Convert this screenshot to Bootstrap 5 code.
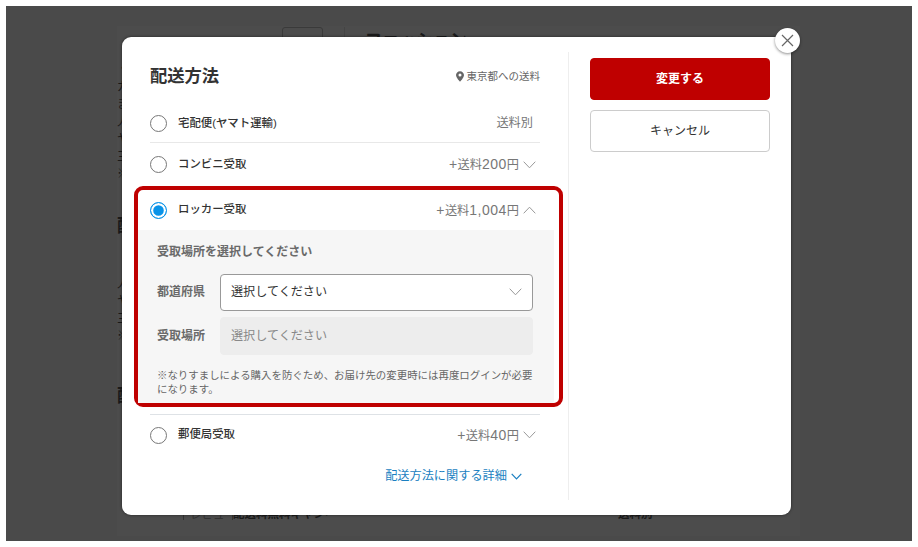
<!DOCTYPE html>
<html lang="ja">
<head>
<meta charset="utf-8">
<title>配送方法</title>
<link href="https://cdn.jsdelivr.net/npm/bootstrap@5.3.0/dist/css/bootstrap.min.css" rel="stylesheet">
<style>
html,body{height:547px;overflow:hidden;background:#fff;}
body{font-family:"Liberation Sans","Noto Sans CJK JP",sans-serif;color:#333;padding:6px;}
.backdrop-area{position:relative;width:906px;height:535px;background:#4a4a4a;overflow:hidden;}
.under-page{margin-left:111px;width:683px;height:510px;margin-top:20px;background:#4c4c4c;color:#1a1a1a;overflow:hidden;}
.under-top{height:27px;padding-top:1px;}
.under-box{width:41px;height:30px;border:1px solid #3a3a3a;border-radius:3px;margin-left:165px;}
.under-title{font-size:17px;font-weight:700;line-height:26px;margin-left:21px;padding:1px 0 0 20px;border-left:1px solid #444;height:30px;}
.under-text{font-size:12px;line-height:17.5px;margin-top:8px;white-space:nowrap;}
.under-text.later{margin-top:20.5px;}
.under-head{font-size:18px;font-weight:700;line-height:24px;margin-top:30px;}
.under-head.later{margin-top:38px;}
.under-foot{height:12px;margin-top:100.5px;font-size:11.5px;line-height:12px;}
.foot-box{width:50px;margin-left:66px;border:1px solid #333;border-bottom:0;padding-left:6px;color:#333;overflow:hidden;white-space:nowrap;}
.foot-strong{width:95px;font-weight:700;white-space:nowrap;overflow:hidden;}
.foot-right{margin-left:290px;font-weight:700;white-space:nowrap;}
.sheet{position:absolute;left:116px;top:31px;width:669px;height:478px;background:#fff;border-radius:9px;box-shadow:0 0 3px rgba(0,0,0,.55);padding:15px 0;}
.close-round{position:absolute;left:653px;top:-9px;width:25px;height:25px;border-radius:50%;background:#fff;border:0;padding:0;box-shadow:0 1px 3px rgba(0,0,0,.45);}
.main-col{width:447px;padding:0 28px;border-right:1px solid #eee;height:448px;}
.side-col{width:222px;padding:6px 21px 0 21px;}
.sheet-title{height:50px;}
.sheet-title h2{font-size:17.3px;font-weight:700;margin:0;line-height:49px;color:#333;}
.area-note{font-size:10.5px;color:#666;line-height:49px;}
.area-pin{margin-right:3px;}
.ship-row{height:41px;padding-right:4px;}
.ship-row.rule{border-bottom:1px solid #e8e8e8;padding-top:3px;padding-right:7px;}
.ship-row.tall{height:43px;}
.ship-radio{width:17px;height:17px;margin:0 11px 0 0 !important;border:1.7px solid #777;flex:none;background-color:#fff;}
.ship-radio:checked{background-color:#0a93e8;border-color:#0a93e8;background-image:none;box-shadow:inset 0 0 0 2.2px #fff;}
.ship-name{font-size:11.4px;font-weight:500;color:#333;}
.ship-fee{font-size:12.2px;color:#777;}
.fee-num{font-size:14px;letter-spacing:.5px;}
.fee-chevron{margin-left:4px;}
.locker-box{margin:0 -23px 7px -16px;border:4px solid #bf0000;border-radius:9px;height:221px;}
.locker-head{height:40px;padding:0 23px 0 12px;}
.locker-panel{width:416px;height:173px;background:#f6f6f6;padding:12px 21px 0 19px;}
.panel-title{font-size:12px;font-weight:700;color:#6a6a6a;line-height:20px;margin-bottom:12px;}
.field-row{margin-bottom:6.5px;}
.field-label{width:63px;font-size:12px;font-weight:700;color:#6a6a6a;flex:none;}
.field-select{height:36.5px;padding:0 10px;font-size:12.1px;color:#333;border:1px solid #999;border-radius:4px;background-position:right 10px center;background-size:13px 8px;background-image:url("data:image/svg+xml,%3Csvg xmlns='http://www.w3.org/2000/svg' viewBox='0 0 13 8'%3E%3Cpath d='M.7.7 6.5 6.8 12.3.7' fill='none' stroke='%23999' stroke-width='1'/%3E%3C/svg%3E");}
.field-select:disabled{height:37.5px;background-color:#ededed;border-color:#ededed;background-image:none;color:#888;opacity:1;}
.panel-note{font-size:10.44px;line-height:14px;color:#666;margin:14px 0 0;}
.more-link{font-size:12.2px;color:#1a7fc1;text-decoration:none;line-height:20px;}
.more-wrap{padding:11px 18px 0 0;}
.primary-act{height:42px;background:#bf0000;border:1px solid #bf0000;border-radius:4px;color:#fff;font-size:12px;font-weight:700;margin-bottom:10px;}
.primary-act:hover{background:#bf0000;color:#fff;}
.ghost-act{height:42px;background:#fff;border:1px solid #ccc;border-radius:4px;color:#333;font-size:12px;}
</style>
</head>
<body>
<div class="backdrop-area">
  <div class="under-page">
    <div class="under-top d-flex overflow-hidden"><div class="under-box"></div><div class="under-title">ファッション</div></div>
    <div class="under-text">・<br>ガ送料<br>ま送料<br>人送料<br>ヤ送料<br>三送料<br>※送料</div>
    <div class="under-head">配送</div>
    <div class="under-text later">「送料<br>人送料<br>ヤ送料<br>三送料<br>※送料</div>
    <div class="under-head later">配送</div>
    <div class="under-foot d-flex">
      <div class="foot-box">レビュー</div>
      <div class="foot-strong">配送料無料キャンペーン対象</div>
      <div class="foot-right">送料別</div>
    </div>
  </div>

  <div class="sheet d-flex">
    <div class="main-col">
      <div class="sheet-title d-flex justify-content-between align-items-start">
        <h2>配送方法</h2>
        <span class="area-note d-flex align-items-center">
          <svg class="area-pin" width="8" height="11" viewBox="0 0 9 12"><path fill-rule="evenodd" fill="#666" d="M4.500 0C2 0 0 2 0 4.400 0 7.500 4.500 12 4.500 12S9 7.500 9 4.400C9 2 7 0 4.500 0Zm0 6a1.700 1.700 0 1 1 0-3.400 1.700 1.700 0 0 1 0 3.400Z"/></svg>東京都への送料
        </span>
      </div>

      <div class="ship-row rule d-flex align-items-center">
        <input class="form-check-input ship-radio" type="radio" name="ship" aria-label="宅配便">
        <span class="ship-name flex-grow-1">宅配便(ヤマト運輸)</span>
        <span class="ship-fee">送料別</span>
      </div>
      <div class="ship-row tall d-flex align-items-center">
        <input class="form-check-input ship-radio" type="radio" name="ship" aria-label="コンビニ">
        <span class="ship-name flex-grow-1">コンビニ受取</span>
        <span class="ship-fee"><span class="fee-num">+</span>送料<span class="fee-num">200</span>円</span>
        <svg class="fee-chevron" width="13" height="8" viewBox="0 0 13 8"><path d="M.7.7 6.500 6.800 12.300.7" fill="none" stroke="#999" stroke-width="1"/></svg>
      </div>

      <div class="locker-box">
        <div class="locker-head d-flex align-items-center">
          <input class="form-check-input ship-radio" type="radio" name="ship" checked aria-label="ロッカー">
          <span class="ship-name flex-grow-1">ロッカー受取</span>
          <span class="ship-fee"><span class="fee-num">+</span>送料<span class="fee-num">1,004</span>円</span>
          <svg class="fee-chevron" width="13" height="8" viewBox="0 0 13 8"><path d="M.7 7.300 6.500 1.200 12.300 7.300" fill="none" stroke="#999" stroke-width="1"/></svg>
        </div>
        <div class="locker-panel">
          <div class="panel-title">受取場所を選択してください</div>
          <div class="field-row d-flex align-items-center">
            <span class="field-label">都道府県</span>
            <select class="form-select field-select" aria-label="都道府県"><option>選択してください</option></select>
          </div>
          <div class="field-row d-flex align-items-center">
            <span class="field-label">受取場所</span>
            <select class="form-select field-select" disabled aria-label="受取場所"><option>選択してください</option></select>
          </div>
          <p class="panel-note">※なりすましによる購入を防ぐため、お届け先の変更時には再度ログインが必要になります。</p>
        </div>
      </div>

      <div class="ship-row d-flex align-items-center border-top">
        <input class="form-check-input ship-radio" type="radio" name="ship" aria-label="郵便局">
        <span class="ship-name flex-grow-1">郵便局受取</span>
        <span class="ship-fee"><span class="fee-num">+</span>送料<span class="fee-num">40</span>円</span>
        <svg class="fee-chevron" width="13" height="8" viewBox="0 0 13 8"><path d="M.7.7 6.500 6.800 12.300.7" fill="none" stroke="#999" stroke-width="1"/></svg>
      </div>
      <div class="more-wrap d-flex justify-content-end">
        <a class="more-link d-inline-flex align-items-center" href="#">配送方法に関する詳細
          <svg class="ms-1" width="11" height="7" viewBox="0 0 11 7"><path d="M.7.8 5.500 5.800 10.300.8" fill="none" stroke="#1a7fc1" stroke-width="1.200"/></svg>
        </a>
      </div>
    </div>
    <div class="side-col">
      <button class="btn primary-act w-100 d-block" type="button">変更する</button>
      <button class="btn ghost-act w-100 d-block" type="button">キャンセル</button>
    </div>
    <button class="close-round d-flex align-items-center justify-content-center" type="button" aria-label="閉じる">
      <svg width="13" height="13" viewBox="0 0 13 13"><path d="M1 1 12 12M12 1 1 12" stroke="#666" stroke-width="1.200" fill="none"/></svg>
    </button>
  </div>
</div>
</body>
</html>
